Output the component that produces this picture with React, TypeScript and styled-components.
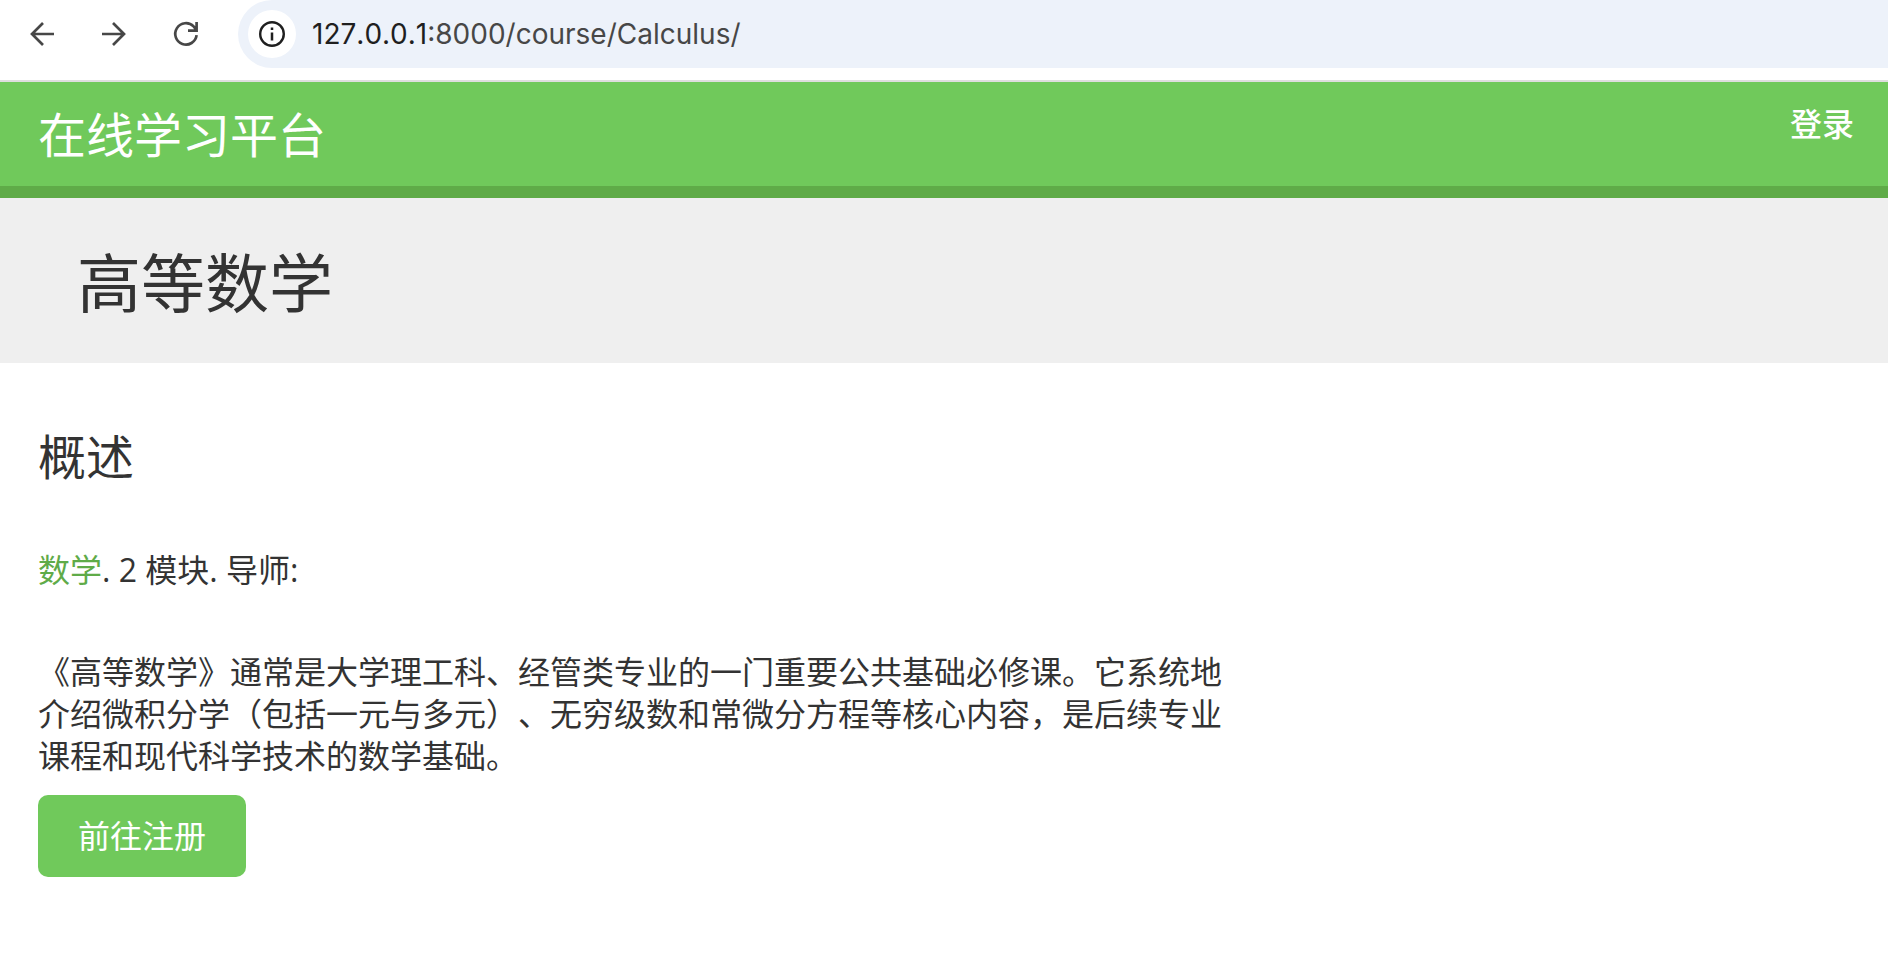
import React from "react";
import styled, { createGlobalStyle } from "styled-components";

const GlobalStyle = createGlobalStyle`
  * { box-sizing: border-box; }
  body {
    margin: 0;
    background: #fff;
    color: #333;
    font-family: "Open Sans", "Noto Sans CJK SC", sans-serif;
    font-size: 32px;
    line-height: 42px;
    text-spacing-trim: space-all;
  }
`;

const BrowserBar = styled.div`
  display: flex;
  align-items: flex-start;
  height: 82px;
  padding-left: 24px;
  border-bottom: 2px solid #dedede;
`;

const NavButtons = styled.div`
  display: flex;
  gap: 36px;
  padding: 16px 34px 0 0;
`;

const NavButton = styled.button`
  display: flex;
  width: 36px;
  height: 36px;
  padding: 0;
  border: 0;
  background: none;
  color: #474747;
`;

const AddressBar = styled.div`
  display: flex;
  flex: 1;
  align-items: center;
  gap: 16px;
  height: 68px;
  padding-left: 10px;
  border-radius: 34px 0 0 34px;
  background: #edf2fa;
`;

const SiteInfo = styled.button`
  display: flex;
  align-items: center;
  justify-content: center;
  width: 48px;
  height: 48px;
  padding: 0;
  border: 0;
  border-radius: 50%;
  background: #fff;
  color: #1f1f1f;
`;

const Url = styled.div`
  color: #474747;
  font-family: Inter, sans-serif;
  font-size: 28px;
  line-height: 34px;
  font-kerning: none;
`;

const Host = styled.span`
  color: #1f1f1f;
`;

const Header = styled.header`
  display: flex;
  align-items: flex-start;
  justify-content: space-between;
  padding: 21px 34px 19px 38px;
  border-bottom: 12px solid #5fab48;
  background: #70c95b;
`;

const Logo = styled.a`
  color: #fff;
  font-size: 48px;
  line-height: 64px;
  text-decoration: none;
`;

const LoginLink = styled.a`
  color: #fff;
  font-weight: 500;
  text-decoration: none;
`;

const CourseTitle = styled.h1`
  margin: 0;
  padding: 45px 77px 40px;
  background: #efefef;
  font-size: 64px;
  font-weight: 400;
  line-height: 80px;
`;

const Content = styled.main`
  padding: 62px 38px 40px;
`;

const SectionTitle = styled.h2`
  margin: 0 0 60px;
  font-size: 48px;
  font-weight: 400;
  line-height: 64px;
`;

const Meta = styled.p`
  margin: 0 0 60px;
`;

const SubjectLink = styled.a`
  color: #5fab48;
  text-decoration: none;
`;

const Overview = styled.p`
  max-width: 1188px;
  margin: 0 0 18px;
`;

const EnrollButton = styled.button`
  display: block;
  padding: 20px 40px;
  border: 0;
  border-radius: 10px;
  background: #70c95b;
  color: #fff;
  font: inherit;
`;

function NavIcon({ children }: { children: React.ReactNode }) {
  return (
    <svg width="36" height="36" viewBox="0 0 36 36" fill="none" stroke="currentColor" strokeWidth="2.7" aria-hidden="true">
      {children}
    </svg>
  );
}

export default function App() {
  return (
    <>
      <GlobalStyle />
      <BrowserBar>
        <NavButtons>
          <NavButton aria-label="Back">
            <NavIcon>
              <path d="M30 18H8M19 7 8 18l11 11" />
            </NavIcon>
          </NavButton>
          <NavButton aria-label="Forward">
            <NavIcon>
              <path d="M6 18h22M17 7l11 11-11 11" />
            </NavIcon>
          </NavButton>
          <NavButton aria-label="Reload">
            <NavIcon>
              <path d="M28.6 19.2A10.7 10.7 0 1 1 25.6 10.4L28 13.4M28.6 6v8.6H20" />
            </NavIcon>
          </NavButton>
        </NavButtons>
        <AddressBar>
          <SiteInfo aria-label="Site information">
            <svg width="26" height="26" viewBox="0 0 26 26" fill="none" stroke="currentColor" aria-hidden="true">
              <circle cx="13" cy="13" r="11.8" strokeWidth="2.4" />
              <path d="M13 11.5v8M13 6.5v2.6" strokeWidth="2.5" />
            </svg>
          </SiteInfo>
          <Url>
            <Host>127.0.0.1</Host>:8000/course/Calculus/
          </Url>
        </AddressBar>
      </BrowserBar>
      <Header>
        <Logo href="#">在线学习平台</Logo>
        <LoginLink href="#">登录</LoginLink>
      </Header>
      <CourseTitle>高等数学</CourseTitle>
      <Content>
        <SectionTitle>概述</SectionTitle>
        <Meta>
          <SubjectLink href="#">数学</SubjectLink>. 2 模块. 导师:
        </Meta>
        <Overview>
          《高等数学》通常是大学理工科、经管类专业的一门重要公共基础必修课。它系统地介绍微积分学（包括一元与多元）、无穷级数和常微分方程等核心内容，是后续专业课程和现代科学技术的数学基础。
        </Overview>
        <EnrollButton>前往注册</EnrollButton>
      </Content>
    </>
  );
}
